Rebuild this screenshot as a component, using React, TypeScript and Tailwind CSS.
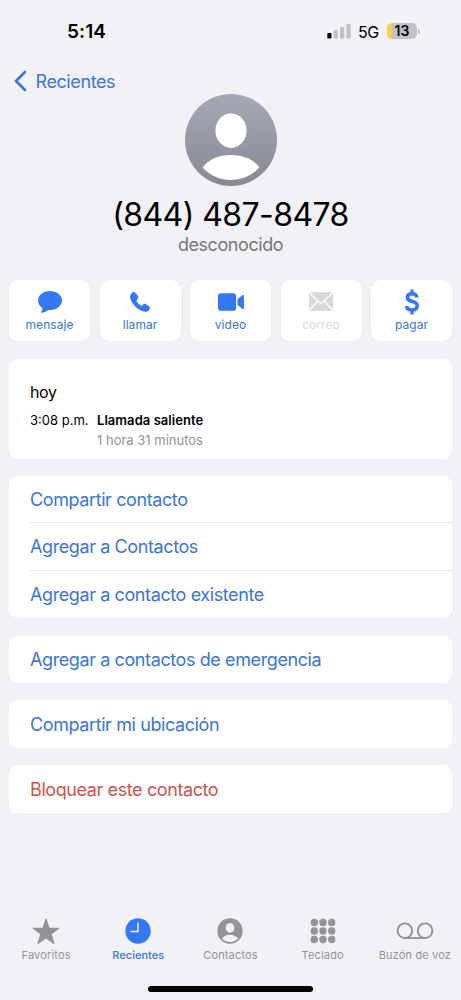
import React from 'react';

const BLUE = '#3478f6';
const GRAY = '#939398';

const MessageIcon = () => (
  <svg width="26" height="24" viewBox="0 0 26 24" fill={BLUE} aria-hidden="true">
    <path d="M13 1C6.2 1 1 5.2 1 10.500c0 3.200 1.700 5.900 4.500 7.500 0 1.300-.5 2.400-1.200 3.400-.5.700-.1 1.400.7 1.300 2.500-.4 4.500-1.500 6.100-2.800.6.100 1.300.1 1.900.1 6.800 0 12-4.200 12-9.500S19.800 1 13 1z" />
  </svg>
);

const PhoneIcon = () => (
  <svg width="22" height="22" viewBox="0 0 22 22" fill={BLUE} aria-hidden="true">
    <path d="M2.600 2.200C3.700.9 5.400.7 6.600 2l2.200 3.100c.8 1.200.6 2.200-.3 3.100l-.8.8c-.4.4-.3.9 0 1.400 1.100 1.600 2.600 3 4.200 4.100.5.300 1 .3 1.400-.1l.8-.8c.9-.9 1.900-1.100 3-.3l3 2.100c1.200.9 1.200 2.200.1 3.500-1.500 1.800-3.600 2.400-6.400 1.400C8 18.200 3.800 13.800 1.600 8.600.5 6 .9 3.900 2.600 2.200z" />
  </svg>
);

const VideoIcon = () => (
  <svg width="28" height="20" viewBox="0 0 28 20" fill={BLUE} aria-hidden="true">
    <rect x="1" y="1.300" width="18" height="17.400" rx="2.800" />
    <path d="M20.500 7.300 25.200 3.300c.8-.7 1.800-.3 1.800.7v12c0 1-1 1.400-1.800.7l-4.700-4z" />
  </svg>
);

const MailIcon = () => (
  <svg width="24" height="19" viewBox="0 0 24 19" aria-hidden="true">
    <rect width="24" height="19" rx="2" fill="#d9d9da" />
    <path d="M.5 1 10.300 10.200c1 .9 2.400.9 3.400 0L23.500 1M.5 18 8.700 9.300M23.500 18l-8.200-8.700" fill="none" stroke="#fff" strokeWidth="1.400" />
  </svg>
);

const DollarIcon = () => (
  <svg width="16" height="26" viewBox="0 0 16 26" fill="none" stroke={BLUE} strokeWidth="3.600" aria-hidden="true">
    <path d="M8 .5V4M8 22v3.500" strokeWidth="3.200" />
    <path d="M12.900 8.500C12.600 6.200 10.900 4.800 8 4.800c-2.800 0-4.600 1.400-4.600 3.600s1.500 3.100 4.400 3.800l.8.200c3.100.7 4.600 2 4.600 4.400 0 2.700-2.100 4.200-5.200 4.200s-5.100-1.500-5.400-4" />
  </svg>
);

const StarIcon = () => (
  <svg width="28" height="27" viewBox="0 0 28 27" fill={GRAY} stroke={GRAY} strokeWidth="1.200" strokeLinejoin="round" aria-hidden="true">
    <path d="m14 1.300 3.100 9H26.700l-7.700 5.700 2.900 9.300L14 19.700l-7.900 5.600L9 16 1.300 10.300h9.600z" />
  </svg>
);

const ClockIcon = () => (
  <svg width="26" height="26" viewBox="0 0 26 26" aria-hidden="true">
    <circle cx="13" cy="13" r="12.700" fill={BLUE} />
    <path d="M13 5v8.500H6" fill="none" stroke="#f2f1f6" strokeWidth="1.500" strokeLinecap="round" strokeLinejoin="round" />
  </svg>
);

const PersonIcon = () => (
  <svg width="26" height="26" viewBox="0 0 26 26" aria-hidden="true">
    <circle cx="13" cy="13" r="12.700" fill={GRAY} />
    <ellipse cx="13" cy="9.900" rx="4.300" ry="4.800" fill="#f2f1f6" />
    <path d="M4.800 20.500C6.500 18 9.500 16.700 13 16.700s6.500 1.300 8.200 3.800C19.200 22.700 16.300 24 13 24s-6.200-1.300-8.200-3.500z" fill="#f2f1f6" />
  </svg>
);

const KeypadIcon = () => (
  <svg width="26" height="26" viewBox="0 0 26 26" fill={GRAY} aria-hidden="true">
    {[4.500, 13, 21.500].map((y) => [4.300, 13, 21.700].map((x) => <circle key={`${x}-${y}`} cx={x} cy={y} r="3.700" />))}
  </svg>
);

const VoicemailIcon = () => (
  <svg width="38" height="18" viewBox="0 0 38 18" fill="none" stroke={GRAY} strokeWidth="1.900" aria-hidden="true">
    <circle cx="8.900" cy="8.700" r="7.300" />
    <circle cx="29.100" cy="8.700" r="7.300" />
    <path d="M9 16h20" />
  </svg>
);

const ACTIONS = [
  { label: 'mensaje', icon: <MessageIcon /> },
  { label: 'llamar', icon: <PhoneIcon /> },
  { label: 'video', icon: <VideoIcon /> },
  { label: 'correo', icon: <MailIcon />, disabled: true },
  { label: 'pagar', icon: <DollarIcon /> },
];

const TABS = [
  { label: 'Favoritos', icon: <StarIcon /> },
  { label: 'Recientes', icon: <ClockIcon />, active: true },
  { label: 'Contactos', icon: <PersonIcon /> },
  { label: 'Teclado', icon: <KeypadIcon /> },
  { label: 'Buzón de voz', icon: <VoicemailIcon /> },
];

const StatusBar: React.FC = () => (
  <div className="flex h-[62px] items-center justify-between pl-[67px] pr-[41px]">
    <span className="mt-px text-[19px] font-semibold leading-none tracking-[0.1px]">5:14</span>
    <div className="flex items-center">
      <svg width="25" height="16" viewBox="0 0 25 16" fill="#c2c2c6" aria-hidden="true">
        <rect x="0.300" y="10" width="4.200" height="5.500" rx="1" fill="#000" />
        <rect x="6.600" y="7" width="4.200" height="8.500" rx="1" />
        <rect x="13" y="4" width="4.200" height="11.500" rx="1" />
        <rect x="19.400" y="0.800" width="4.200" height="14.700" rx="1" />
      </svg>
      <span className="ml-[6px] mt-px text-[16px] leading-none tracking-[-0.3px]">5G</span>
      <div className="ml-[8px] flex h-[16px] w-[30px] items-center justify-center rounded-[5px] bg-[linear-gradient(to_right,#f3cf55_5px,#c2c2c6_5px)]">
        <span className="text-[14px] font-semibold leading-none">13</span>
      </div>
      <span className="ml-[1px] h-[5px] w-[2px] rounded-r-full bg-[#c2c2c6]" />
    </div>
  </div>
);

const Row: React.FC<{ label: string; danger?: boolean }> = ({ label, danger }) => (
  <div className={`flex h-[47.500px] items-center pt-px text-[18px] tracking-[-0.4px] ${danger ? 'text-[#d0524a]' : 'text-[#3b75d6]'}`}>
    {label}
  </div>
);

const App: React.FC = () => {
  return (
    <div className="flex h-[1000px] w-[461px] flex-col overflow-hidden bg-[#f2f1f6] font-['Inter',sans-serif] text-black">
      <StatusBar />

      {/* Back link */}
      <div className="flex h-[32px] items-center gap-[9px] pl-[13.500px] pt-[6px] text-[#3b75d6]">
        <svg width="13" height="22" viewBox="0 0 13 22" fill="none" stroke="#3b75d6" strokeWidth="2.600" strokeLinecap="round" strokeLinejoin="round" aria-hidden="true">
          <path d="M11 2 2 11l9 9" />
        </svg>
        <span className="mt-px text-[18px] leading-none tracking-[-0.41px]">Recientes</span>
      </div>

      {/* Contact header */}
      <div className="flex h-[185.500px] flex-col items-center">
        <svg width="92" height="92" viewBox="0 0 92 92" className="shrink-0" aria-hidden="true">
          <defs>
            <linearGradient id="avatar" x1="0" y1="0" x2="0" y2="1">
              <stop offset="0" stopColor="#a5a9b5" />
              <stop offset="1" stopColor="#868993" />
            </linearGradient>
          </defs>
          <circle cx="46" cy="46" r="46" fill="url(#avatar)" />
          <ellipse cx="46" cy="36.700" rx="15.600" ry="17.200" fill="#fff" />
          <path d="M17.500 73.500C24 65 34 61 46 61s22 4 28.500 12.500C67 81.500 57 86 46 86s-21-4.500-28.500-12.500z" fill="#fff" />
        </svg>
        <h1 className="mt-[11px] text-[32px] leading-[36px] tracking-[-0.58px]">(844) 487-8478</h1>
        <p className="mt-[1px] text-[18px] leading-[22px] tracking-[-0.43px] text-[#77777c]">desconocido</p>
      </div>

      {/* Quick actions */}
      <div className="grid h-[61.500px] grid-cols-5 gap-[9.500px] px-[9px]">
        {ACTIONS.map(({ label, icon, disabled }) => (
          <div key={label} className="flex flex-col items-center rounded-[10px] bg-white shadow-[0_0_12px_rgba(0,0,0,0.02)]">
            <div className="mt-[9px] flex h-[26px] items-center justify-center">{icon}</div>
            <span className={`mt-[2px] text-[12px] leading-[16px] tracking-[0.05px] ${disabled ? 'text-[#d9d9da]' : 'text-[#3b75d6]'}`}>
              {label}
            </span>
          </div>
        ))}
      </div>

      {/* Call log */}
      <div className="mx-[9px] mt-[18px] h-[99.500px] rounded-[9px] bg-white pl-[21px] pt-[23px]">
        <p className="text-[16px] leading-[20px] tracking-[-0.4px]">hoy</p>
        <div className="mt-[9px] flex text-[13px] leading-[18px]">
          <span className="w-[67px]">3:08 p.m.</span>
          <div>
            <p className="font-semibold tracking-[0.05px]">Llamada saliente</p>
            <p className="mt-[2px] text-[#939398]">1 hora 31 minutos</p>
          </div>
        </div>
      </div>

      <div className="mx-[9px] mt-[17px] divide-y divide-[#e6e6e9] rounded-[9px] bg-white pl-[21px]">
        <Row label="Compartir contacto" />
        <Row label="Agregar a Contactos" />
        <Row label="Agregar a contacto existente" />
      </div>

      <div className="mx-[9px] mt-[17.500px] flex flex-col gap-[17.300px]">
        <div className="rounded-[9px] bg-white pl-[21px]"><Row label="Agregar a contactos de emergencia" /></div>
        <div className="rounded-[9px] bg-white pl-[21px]"><Row label="Compartir mi ubicación" /></div>
        <div className="rounded-[9px] bg-white pl-[21px]"><Row label="Bloquear este contacto" danger /></div>
      </div>

      {/* Tab bar */}
      <nav className="mt-auto grid h-[69px] grid-cols-5">
        {TABS.map(({ label, icon, active }) => (
          <div key={label} className="flex flex-col items-center">
            <div className="flex h-[28px] items-center">{icon}</div>
            <span className={`mt-[3px] whitespace-nowrap text-[11px] leading-[14px] ${active ? 'font-medium tracking-[0.02px] text-[#3b75d6]' : 'tracking-[0.15px] text-[#939398]'}`}>
              {label}
            </span>
          </div>
        ))}
      </nav>
      <div className="mx-auto mb-[8.500px] h-[5.500px] w-[165px] shrink-0 rounded-full bg-black" />
    </div>
  );
};

export default App;
